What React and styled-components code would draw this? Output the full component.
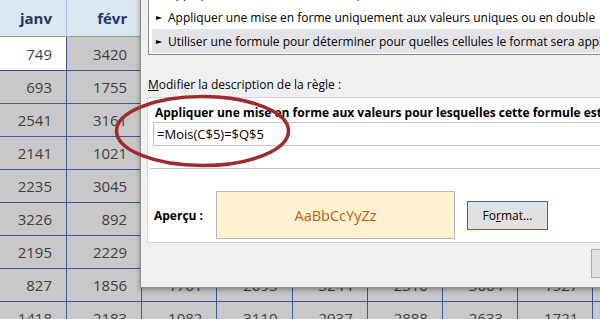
import styled, { createGlobalStyle } from 'styled-components';

// Page reset

const GlobalStyle = createGlobalStyle`
  html, body {
    margin: 0;
    padding: 0;
    background: #ffffff;
  }
  body {
    width: 600px;
    height: 319px;
    overflow: hidden;
    font-family: "Open Sans", "Noto Sans", sans-serif;
  }
`;

const Screen = styled.div`
  position: relative;
  width: 600px;
  height: 319px;
  overflow: hidden;
`;

// Spreadsheet behind the dialog

const Sheet = styled.div`
  display: grid;
  grid-template-columns: 67px repeat(8, 75.2px);
  grid-template-rows: 37px 34px;
  grid-auto-rows: 33px;
  font-family: "Open Sans", sans-serif;
  font-size: 15px;
`;

const HeadCell = styled.div`
  display: flex;
  align-items: center;
  justify-content: flex-end;
  padding-right: 14px;
  background: #dce6f1;
  color: #1f3864;
  font-weight: bold;
  border-right: 1px solid #a9bfdc;
  border-bottom: 1px solid #7fae7a;
`;

const Cell = styled.div`
  display: flex;
  align-items: center;
  justify-content: flex-end;
  padding-right: 14px;
  background: ${(p) => (p.$plain ? '#ffffff' : '#c8c8c8')};
  color: #404040;
  border-right: 1px solid #3b5794;
  border-bottom: 1px solid #3b5794;
`;

// Dialog

const Dialog = styled.div`
  position: absolute;
  left: 140px;
  top: -40px;
  width: 620px;
  box-sizing: border-box;
  display: flex;
  flex-direction: column;
  padding: 16px 10px 0 7px;
  background: #f0f0f0;
  border: 1px solid #8c8c8c;
  box-shadow: 0 2px 5px rgba(0, 0, 0, 0.35);
  font-family: "Open Sans", "Noto Sans", sans-serif;
  font-size: 12px;
  color: #000000;
`;

const ListBox = styled.div`
  display: flex;
  flex-direction: column;
  padding: 3px 3px 1px;
  background: #ffffff;
  border: 1px solid #828790;
  overflow: hidden;
`;

const RuleRow = styled.div`
  display: flex;
  align-items: center;
  height: 24px;
  padding-left: 4px;
  white-space: nowrap;
  background: ${(p) => (p.$selected ? '#e3e3e8' : 'transparent')};
`;

const Arrow = styled.span`
  width: 12px;
  font-family: "DejaVu Sans", sans-serif;
  font-size: 8px;
`;

const Label = styled.div`
  margin-top: 22px;
  line-height: 16px;
`;

const GroupBox = styled.div`
  display: flex;
  flex-direction: column;
  margin: 4px 0 0 -1px;
  padding: 7px 0 3px 7px;
  background: #ffffff;
  border: 1px solid #d5d5d5;
`;

const Heading = styled.div`
  font-weight: bold;
  line-height: 16px;
  white-space: nowrap;
  overflow: hidden;
`;

const FormulaInput = styled.div`
  box-sizing: border-box;
  height: 24px;
  margin: 1px 4px 0 -2px;
  padding-left: 3px;
  line-height: 22px;
  font-size: 13px;
  border: 1px solid #c3c3c3;
`;

const Separator = styled.div`
  height: 1px;
  margin: 22px 3px 0 -5px;
  background: #c8c8c8;
`;

const PreviewRow = styled.div`
  display: flex;
  align-items: center;
  margin-top: 22px;
  margin-left: -1px;
`;

const PreviewLabel = styled.div`
  width: 62px;
  font-weight: bold;
`;

const PreviewBox = styled.div`
  box-sizing: border-box;
  display: flex;
  align-items: center;
  justify-content: center;
  width: 239px;
  height: 48px;
  background: #fff2d3;
  border: 1px solid #b9b9b9;
  color: #c55a11;
  font-size: 14.5px;
`;

const Button = styled.button`
  box-sizing: border-box;
  width: ${(p) => p.$width || 75}px;
  height: 29px;
  margin-left: ${(p) => p.$gap || 0}px;
  padding: 0;
  background: #e1e1e1;
  border: 1px solid ${(p) => (p.$focused ? '#0078d7' : '#adadad')};
  font-family: "Open Sans", sans-serif;
  font-size: 12px;
  color: #000000;
`;

const Footer = styled.div`
  display: flex;
  justify-content: flex-end;
  gap: 8px;
  margin-top: 6px;
  padding-bottom: 9px;
`;

// Red hand-drawn circle over the formula

const Annotation = styled.svg`
  position: absolute;
  left: 0;
  top: 0;
  pointer-events: none;
`;

const months = ['janv', 'févr', 'mars', 'avr', 'mai', 'juin', 'juil', 'août', 'sept'];

const rows = [
  [749, 3420, 2870, 1205, 3312, 954, 2478, 1630, 2214],
  [693, 1755, 1422, 2960, 871, 3105, 2047, 1388, 2712],
  [2541, 3161, 2389, 1674, 2812, 1250, 3390, 2163, 905],
  [2141, 1021, 3077, 2296, 1543, 2688, 1119, 2935, 1760],
  [2235, 3045, 1198, 2750, 3461, 1872, 2304, 1456, 3022],
  [3226, 892, 2615, 1937, 2180, 3350, 1684, 2509, 1247],
  [2195, 2229, 1840, 3128, 1065, 2473, 2916, 1302, 2585],
  [827, 1856, 1761, 2695, 3244, 2310, 3664, 1527, 2098],
  [1418, 2183, 1082, 3110, 2937, 2888, 2633, 1721, 3175],
];

const rules = [
  { text: 'Appliquer une mise en forme uniquement aux valeurs au-dessus ou en dessous de la moyenne' },
  { text: 'Appliquer une mise en forme uniquement aux valeurs uniques ou en double' },
  { text: 'Utiliser une formule pour déterminer pour quelles cellules le format sera appliqué', selected: true },
];

export default function App() {
  return (
    <Screen>
      <GlobalStyle />

      <Sheet>
        {months.map((m) => (
          <HeadCell key={m}>{m}</HeadCell>
        ))}
        {rows.map((row, r) =>
          row.map((v, c) => (
            <Cell key={`${r}-${c}`} $plain={r === 0 && c === 0}>
              {v}
            </Cell>
          ))
        )}
      </Sheet>

      <Dialog>
        <ListBox>
          {rules.map((rule) => (
            <RuleRow key={rule.text} $selected={rule.selected}>
              <Arrow>►</Arrow>
              {rule.text}
            </RuleRow>
          ))}
        </ListBox>

        <Label>
          <u>M</u>odifier la description de la règle :
        </Label>

        <GroupBox>
          <Heading>Appliquer une mise en forme aux valeurs pour lesquelles cette formule est vraie :</Heading>
          <FormulaInput>=Mois(C$5)=$Q$5</FormulaInput>
          <Separator />
          <PreviewRow>
            <PreviewLabel>Aperçu :</PreviewLabel>
            <PreviewBox>AaBbCcYyZz</PreviewBox>
            <Button $width={81} $gap={12} $focused>
              Fo<u>r</u>mat...
            </Button>
          </PreviewRow>
        </GroupBox>

        <Footer>
          <Button>OK</Button>
          <Button>Annuler</Button>
        </Footer>
      </Dialog>

      <Annotation width="600" height="319" viewBox="0 0 600 319">
        <ellipse
          cx="202.5"
          cy="131"
          rx="86"
          ry="34.5"
          fill="none"
          stroke="#9e2b2e"
          strokeWidth="3.5"
        />
      </Annotation>
    </Screen>
  );
}
